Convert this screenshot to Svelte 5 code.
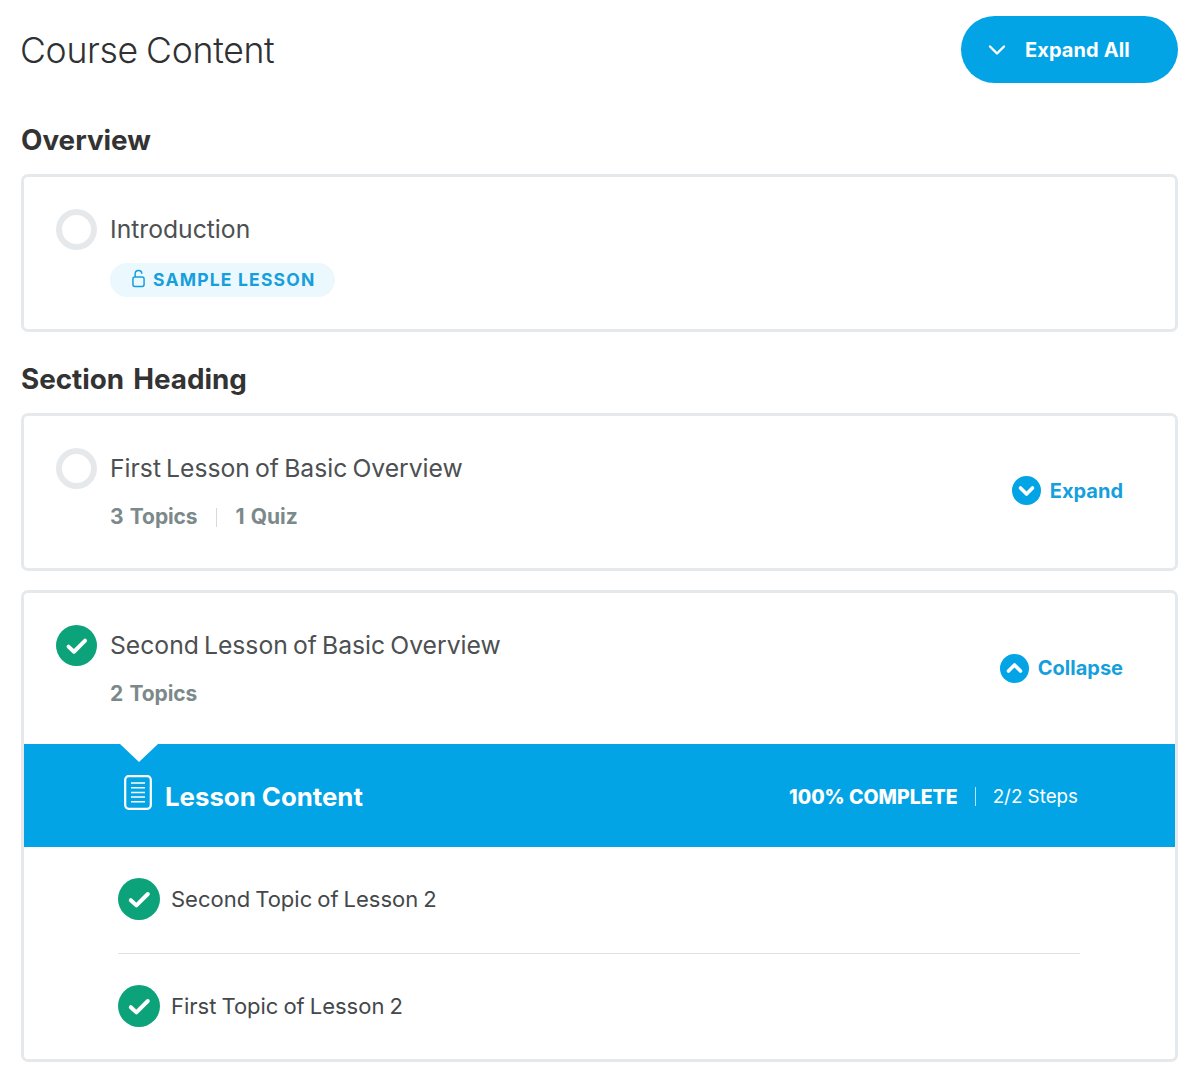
<script>
  const topics = ['Second Topic of Lesson 2', 'First Topic of Lesson 2'];
</script>

{#snippet check(cls)}
  <svg class={cls} viewBox="0 0 42 42" aria-hidden="true">
    <circle cx="21" cy="21" r="21" fill="#0ca27a" />
    <path d="M12.8 22.2l5.6 5.2L29.8 16" fill="none" stroke="#fff" stroke-width="4" stroke-linecap="round" stroke-linejoin="round" />
  </svg>
{/snippet}

<div class="page">
  <header class="top">
    <h1>Course Content</h1>
    <button class="all">
      <svg viewBox="0 0 18 12" class="all-icon" aria-hidden="true"><path d="M2 2.5l7 7 7-7" fill="none" stroke="#fff" stroke-width="2.4" stroke-linecap="round" stroke-linejoin="round" /></svg>
      Expand All
    </button>
  </header>

  <h2 class="first">Overview</h2>
  <section class="card">
    <div class="row">
      <div class="ring"></div>
      <div class="body">
        <div class="title">Introduction</div>
        <div class="pill">
          <svg viewBox="0 0 14 20" class="lock" aria-hidden="true"><rect x="1" y="8.5" width="12" height="10" rx="2" fill="none" stroke="#169fdc" stroke-width="1.6" /><path d="M3.4 8.5V5a3.6 3.6 0 0 1 7.2 0" fill="none" stroke="#169fdc" stroke-width="1.6" /></svg>
          SAMPLE LESSON
        </div>
      </div>
    </div>
  </section>

  <h2>Section Heading</h2>
  <section class="card">
    <div class="row between">
      <div class="lead">
        <div class="ring"></div>
        <div class="body">
          <div class="title">First Lesson of Basic Overview</div>
          <div class="meta"><span>3 Topics</span><i></i><span>1 Quiz</span></div>
        </div>
      </div>
      <div class="toggle">
        <svg viewBox="0 0 29 29" aria-hidden="true"><circle cx="14.5" cy="14.5" r="14.5" fill="#02a4e6" /><path d="M8.5 12l6 6 6-6" fill="none" stroke="#fff" stroke-width="3.6" stroke-linecap="round" stroke-linejoin="round" /></svg>
        Expand
      </div>
    </div>
  </section>

  <section class="card second">
    <div class="row between open">
      <div class="lead">
        {@render check('state small')}
        <div class="body">
          <div class="title">Second Lesson of Basic Overview</div>
          <div class="meta"><span>2 Topics</span></div>
        </div>
      </div>
      <div class="toggle">
        <svg viewBox="0 0 29 29" aria-hidden="true"><circle cx="14.5" cy="14.5" r="14.5" fill="#02a4e6" /><path d="M8.5 17l6-6 6 6" fill="none" stroke="#fff" stroke-width="3.6" stroke-linecap="round" stroke-linejoin="round" /></svg>
        Collapse
      </div>
    </div>

    <div class="band">
      <div class="band-left">
        <svg viewBox="0 0 28 35" class="doc" aria-hidden="true">
          <rect x="1.2" y="1.2" width="25.6" height="32.6" rx="3.5" fill="none" stroke="#fff" stroke-width="2.2" />
          <path d="M7 8h14M7 12.7h14M7 17.4h14M7 22.1h14M7 26.8h14" stroke="#fff" stroke-width="1.5" />
        </svg>
        <span class="band-title">Lesson Content</span>
      </div>
      <div class="band-right">
        <b>100% COMPLETE</b><i></i><span>2/2 Steps</span>
      </div>
    </div>

    <div class="topics">
      {#each topics as t}
        <div class="topic">
          {@render check('state')}
          <span>{t}</span>
        </div>
      {/each}
    </div>
  </section>
</div>

<style>
  :global(body) { margin: 0; background: #fff; }
  .page {
    box-sizing: border-box;
    width: 1200px;
    height: 1080px;
    padding: 16px 22px 0 21px;
    font-family: Inter, "Liberation Sans", sans-serif;
    color: #333;
  }
  .top { display: flex; justify-content: space-between; align-items: center; height: 67px; }
  h1 { margin: 2px 0 0 -1px; font-size: 35.6px; font-weight: 300; line-height: 70px; color: #2f3133; letter-spacing: -0.3px; word-spacing: -1.5px; }
  .all {
    display: flex; align-items: center; gap: 19px;
    box-sizing: border-box; width: 217px; height: 67px; padding: 0 0 0 27px;
    border: 0; border-radius: 34px; background: #02a4e6; color: #fff;
    font: 700 20px/1 Inter, sans-serif; letter-spacing: 0.1px;
  }
  .all-icon { width: 18px; height: 12px; }
  h2 { margin: 0; font-size: 27.8px; font-weight: 700; line-height: 36px; color: #333; padding-top: 29px; padding-bottom: 16px; word-spacing: 2.5px; }
  h2.first { padding-top: 39px; padding-bottom: 16px; }
  .card { border: 3px solid #e6e9ec; border-radius: 7px; background: #fff; }
  .second { margin-top: 19px; height: 472px; box-sizing: border-box; }
  .row { display: flex; gap: 13px; padding: 32px 32px 32px; }
  .between { justify-content: space-between; align-items: center; padding: 32px 52px 36px 32px; }
  .open { padding-bottom: 35px; }
  .lead { display: flex; gap: 13px; }
  .ring { box-sizing: border-box; width: 41px; height: 41px; border: 6px solid #e6e9ec; border-radius: 50%; flex: none; }
  :global(.state) { width: 42px; height: 42px; flex: none; display: block; }
  :global(.state.small) { width: 41px; height: 41px; }
  .title { font-size: 24.7px; line-height: 41px; color: #4c5052; word-spacing: -1.8px; }
  .pill {
    display: inline-flex; align-items: center; gap: 8px;
    box-sizing: border-box; width: 225px; height: 34px; margin-top: 13px; padding: 0 0 2px 22px;
    border-radius: 17px; background: #ebf8fe; color: #169fdc;
    font-size: 17.5px; font-weight: 700; letter-spacing: 1.2px;
  }
  .lock { width: 13px; height: 19px; margin-top: -1px; }
  .meta { display: flex; align-items: center; margin-top: 13px; line-height: 30px; font-size: 21px; font-weight: 700; color: #7c898b; letter-spacing: -0.1px; word-spacing: 1.5px; }
  .meta i { width: 1px; height: 19px; margin: 0 19px 0 18px; background: #d5dadc; }
  .toggle { display: flex; align-items: center; gap: 9px; color: #169fdc; font-size: 20px; font-weight: 700; margin-top: 1px; }
  .toggle svg { width: 29px; height: 29px; }
  .open .toggle { margin-top: 2px; }
  .band {
    position: relative; display: flex; justify-content: space-between; align-items: center;
    box-sizing: border-box; height: 103px; padding: 0 97px 0 100px;
    background: #02a4e6; color: #fff;
  }
  .band::before {
    content: ""; position: absolute; left: 96px; top: 0;
    border-left: 19px solid transparent; border-right: 19px solid transparent; border-top: 18px solid #fff;
  }
  .band-left { display: flex; align-items: center; gap: 13px; margin-top: 1px; }
  .doc { width: 28px; height: 35px; margin-top: -7px; }
  .band-title { font-size: 25.8px; font-weight: 700; }
  .band-right { display: flex; align-items: center; font-size: 18.8px; margin-top: 2px; }
  .band-right b { font-weight: 800; font-size: 19.5px; }
  .band-right i { width: 1px; height: 19px; margin: 0 17px 0 17px; background: #b5e2f7; }
  .topics { padding: 0 95px 0 94px; }
  .topic {
    display: flex; align-items: center; gap: 11px; height: 104px; box-sizing: border-box;
    font-size: 22px; color: #44484a; word-spacing: -1.2px;
  }
  .topic:first-child { height: 107px; padding-bottom: 2px; border-bottom: 1px solid #dfe3e5; }
</style>
